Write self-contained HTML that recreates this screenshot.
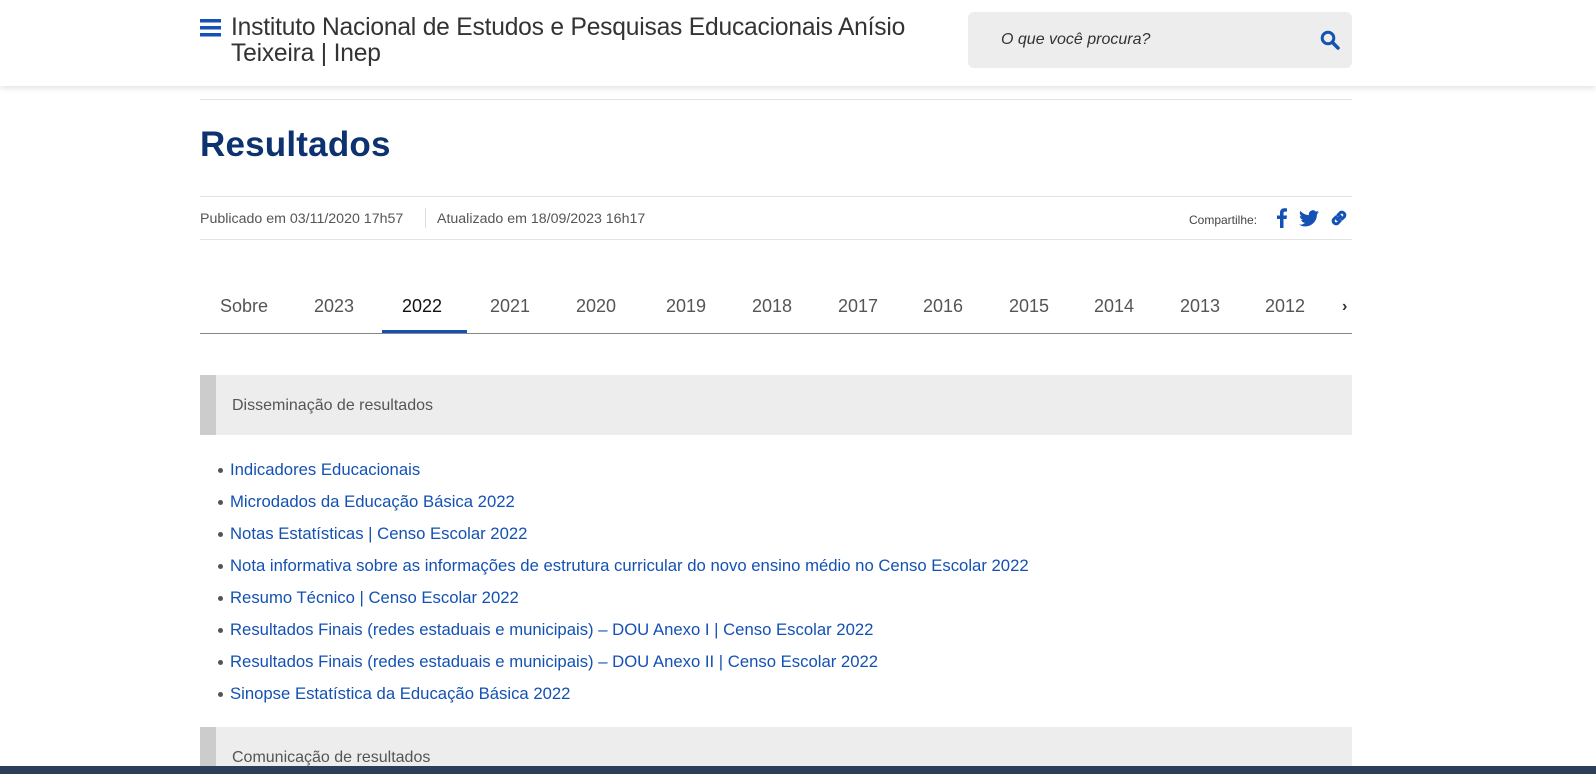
<!DOCTYPE html>
<html style="overflow:hidden;height:774px"><head><meta charset="utf-8"><style>
*{margin:0;padding:0;box-sizing:border-box}
body{width:1596px;height:774px;overflow:hidden;background:#fff;font-family:"Liberation Sans",sans-serif;position:relative;color:#333}
.hdr{position:absolute;left:0;top:0;width:1596px;height:86px;background:#fff;box-shadow:0 2px 6px rgba(0,0,0,.12);z-index:2}
.a{position:absolute}
.title{left:231px;top:15px;font-size:24.6px;line-height:26px;color:#333;letter-spacing:-.2px}
.search{left:968px;top:12px;width:384px;height:56px;background:#ededed;border-radius:6px}
.search span{position:absolute;left:33px;top:19px;font-style:italic;font-size:16px;color:#333}
.line{position:absolute;left:200px;width:1152px;height:1px;background:#e3e3e3}
h1{position:absolute;left:200px;top:125px;font-size:35px;color:#0c326f;font-weight:bold;letter-spacing:.2px}
.meta{top:211px;font-size:14.2px;color:#555}
.tab{top:296px;font-size:18px;color:#555}
ul{position:absolute;left:230px;top:460px;list-style:none}
li{font-size:16.7px;color:#1351b4;height:32px;line-height:20px;position:relative}
li:before{content:"";position:absolute;left:-12px;top:8px;width:5px;height:5px;border-radius:50%;background:#555}
.box{position:absolute;left:200px;width:1152px;height:60px;background:#ededed;border-left:16px solid #ccc}
.box span{position:absolute;left:16px;top:22px;font-size:16px;color:#555}
</style></head><body>
<div class="hdr">
<svg class="a" style="left:200px;top:19px" width="21" height="18" viewBox="0 0 21 18"><rect y="0" width="21" height="3.5" fill="#1351b4"/><rect y="7" width="21" height="3.5" fill="#1351b4"/><rect y="14" width="21" height="3.5" fill="#1351b4"/></svg>
<div class="a title">Instituto Nacional de Estudos e Pesquisas Educacionais Anísio<br>Teixeira | Inep</div>
<div class="a search"><span>O que você procura?</span>
<svg class="a" style="left:352px;top:18px" width="20" height="20" viewBox="0 0 20 20"><circle cx="8" cy="8" r="5.8" fill="none" stroke="#1351b4" stroke-width="3"/><line x1="12.5" y1="12.5" x2="18" y2="18" stroke="#1351b4" stroke-width="3.5" stroke-linecap="round"/></svg></div>
</div>
<div class="line" style="top:99px"></div>
<h1>Resultados</h1>
<div class="line" style="top:196px"></div>
<div class="a meta" style="left:200px">Publicado em 03/11/2020 17h57</div>
<div class="a" style="left:425px;top:208px;width:1px;height:20px;background:#ddd"></div>
<div class="a meta" style="left:437px">Atualizado em 18/09/2023 16h17</div>
<div class="a" style="left:1189px;top:213px;font-size:12px;color:#444">Compartilhe:</div>
<svg class="a" style="left:1277px;top:208px" width="10" height="20" viewBox="0 0 10 20"><path d="M6.5 20V11h3l.5-3.5H6.5V5.3c0-1 .3-1.7 1.8-1.7H10V.4C9.6.3 8.6.2 7.4.2 4.8.2 3 1.8 3 4.7v2.8H0V11h3v9z" fill="#1351b4"/></svg>
<svg class="a" style="left:1299px;top:210px" width="20" height="17" viewBox="0 0 24 20"><path d="M24 2.4c-.9.4-1.8.7-2.8.8 1-.6 1.8-1.600 2.200-2.700-1 .6-2 1-3.100 1.200A4.900 4.900 0 0 0 11.900 6C7.800 5.800 4.200 3.900 1.700.9a4.900 4.900 0 0 0 1.500 6.600c-.8 0-1.600-.3-2.200-.6 0 2.400 1.700 4.400 3.900 4.800-.7.2-1.500.2-2.200.1.6 2 2.400 3.400 4.600 3.400A9.900 9.900 0 0 1 0 17.300 13.900 13.900 0 0 0 7.500 19.500c9.100 0 14-7.500 14-14v-.6c1-.7 1.800-1.600 2.500-2.500z" fill="#1351b4"/></svg>
<svg class="a" style="left:1329px;top:208px" width="20" height="20" viewBox="0 0 20 20"><g fill="none" stroke="#1351b4" stroke-width="3" stroke-linecap="round"><path d="M8.5 11.5l3-3"/><path d="M7 9L4.5 11.5a3 3 0 0 0 4 4L11 13"/><path d="M9 7l2.5-2.5a3 3 0 0 1 4 4L13 11"/></g></svg>
<div class="line" style="top:239px"></div>
<div class="a tab" style="left:220px">Sobre</div>
<div class="a tab" style="left:314px">2023</div>
<div class="a tab" style="left:402px;color:#111">2022</div>
<div class="a tab" style="left:490px">2021</div>
<div class="a tab" style="left:576px">2020</div>
<div class="a tab" style="left:666px">2019</div>
<div class="a tab" style="left:752px">2018</div>
<div class="a tab" style="left:838px">2017</div>
<div class="a tab" style="left:923px">2016</div>
<div class="a tab" style="left:1009px">2015</div>
<div class="a tab" style="left:1094px">2014</div>
<div class="a tab" style="left:1180px">2013</div>
<div class="a tab" style="left:1265px">2012</div>
<div class="a tab" style="left:1342px;color:#333;font-weight:bold;font-size:16px;top:298px;width:10px;overflow:hidden">›</div>
<div class="a" style="left:382px;top:330px;width:85px;height:4px;background:#1351b4"></div>
<div class="a" style="left:200px;top:333px;width:1152px;height:1px;background:#888"></div>
<div class="box" style="top:375px"><span>Disseminação de resultados</span></div>
<ul>
<li>Indicadores Educacionais</li>
<li>Microdados da Educação Básica 2022</li>
<li>Notas Estatísticas | Censo Escolar 2022</li>
<li>Nota informativa sobre as informações de estrutura curricular do novo ensino médio no Censo Escolar 2022</li>
<li>Resumo Técnico | Censo Escolar 2022</li>
<li>Resultados Finais (redes estaduais e municipais) – DOU Anexo I | Censo Escolar 2022</li>
<li>Resultados Finais (redes estaduais e municipais) – DOU Anexo II | Censo Escolar 2022</li>
<li>Sinopse Estatística da Educação Básica 2022</li>
</ul>
<div class="box" style="top:727px;height:39px"><span>Comunicação de resultados</span></div>
<div class="a" style="left:0;top:766px;width:1596px;height:8px;background:#2c3e5a"></div>
</body></html>
